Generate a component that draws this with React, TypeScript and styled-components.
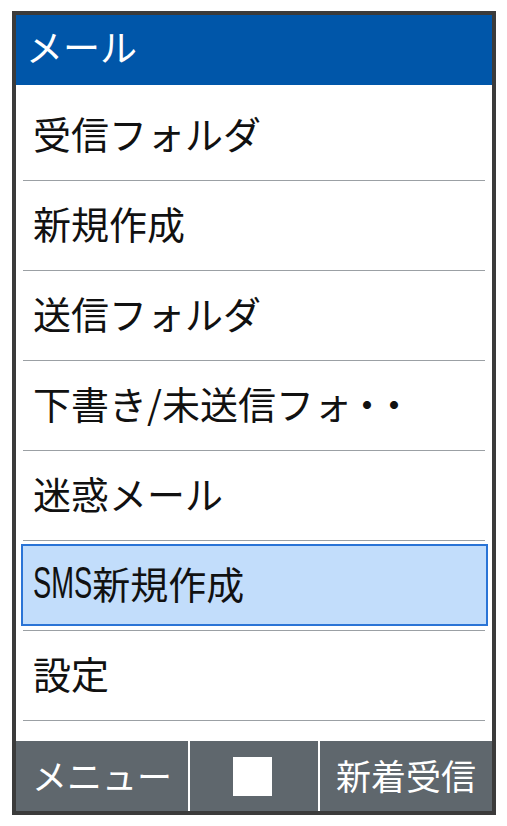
import React from 'react';
import styled, { createGlobalStyle } from 'styled-components';

const items = [
  '受信フォルダ',
  '新規作成',
  '送信フォルダ',
  '下書き/未送信フォ',
  '迷惑メール',
  'SMS新規作成',
  '設定',
];

const selectedIndex = 5;

const GlobalStyle = createGlobalStyle`
  html, body {
    margin: 0;
    padding: 0;
    background: #ffffff;
  }
  body {
    font-family: "Noto Sans CJK JP", "Noto Sans", sans-serif;
  }
`;

const Page = styled.div`
  padding: 11px 0 0 12px;
`;

const Phone = styled.div`
  box-sizing: border-box;
  width: 484px;
  height: 804px;
  border: 4px solid #3b3b3b;
  display: flex;
  flex-direction: column;
  overflow: hidden;
  background: #ffffff;
`;

const Header = styled.div`
  box-sizing: border-box;
  height: 70px;
  flex-shrink: 0;
  display: flex;
  align-items: center;
  padding: 0 0 7px 10px;
  background: #0056a9;
  color: #ffffff;
  font-size: 37px;
  line-height: 1;
`;

const List = styled.div`
  flex: 1;
  overflow: hidden;
  padding-top: 6px;
`;

const Row = styled.div<{ selected: boolean }>`
  position: relative;
  isolation: isolate;
  box-sizing: border-box;
  height: 90px;
  margin: 0 7px;
  padding: 0 0 6px 10px;
  display: flex;
  align-items: center;
  border-bottom: 1px solid #9ba0a4;
  color: #111111;
  font-size: 38px;
  line-height: 1;
  white-space: nowrap;

  ${({ selected }) =>
    selected
      ? `
    &::before {
      content: '';
      position: absolute;
      z-index: -1;
      top: 3px;
      bottom: 4px;
      left: -2px;
      right: -3px;
      background: #c2ddfb;
      border: 2px solid #2a74d6;
    }
  `
      : ''}
`;

const Latin = styled.span`
  display: inline-block;
  font-family: "Liberation Sans", sans-serif;
  font-size: 44px;
  transform: scaleX(0.62);
  transform-origin: left center;
  margin-right: -36px;
`;

const Dots = styled.span`
  letter-spacing: -11px;
  margin-left: -4px;
`;

const Footer = styled.div`
  height: 70px;
  flex-shrink: 0;
  display: grid;
  grid-template-columns: 172px 128px 172px;
  gap: 2px;
  background: #ffffff;
`;

const SoftKey = styled.div`
  box-sizing: border-box;
  display: flex;
  align-items: center;
  justify-content: center;
  padding-bottom: 4px;
  background: #5f676d;
  color: #ffffff;
  font-size: 35px;
  line-height: 1;
  white-space: nowrap;
`;

const CenterMark = styled.div`
  width: 39px;
  height: 39px;
  margin: 4px 0 0 -3px;
  background: #ffffff;
`;

const renderLabel = (label: string, index: number) => {
  if (label.startsWith('SMS')) {
    return (
      <>
        <Latin>SMS</Latin>
        {label.slice(3)}
      </>
    );
  }
  if (index === 3) {
    return (
      <>
        {label}
        <Dots>・・</Dots>
      </>
    );
  }
  return label;
};

const App: React.FC = () => {
  return (
    <>
      <GlobalStyle />
      <Page>
        <Phone>
          <Header>メール</Header>
          <List>
            {items.map((label, i) => (
              <Row key={label} selected={i === selectedIndex}>
                {renderLabel(label, i)}
              </Row>
            ))}
          </List>
          <Footer>
            <SoftKey>メニュー</SoftKey>
            <SoftKey>
              <CenterMark />
            </SoftKey>
            <SoftKey>新着受信</SoftKey>
          </Footer>
        </Phone>
      </Page>
    </>
  );
};

export default App;
